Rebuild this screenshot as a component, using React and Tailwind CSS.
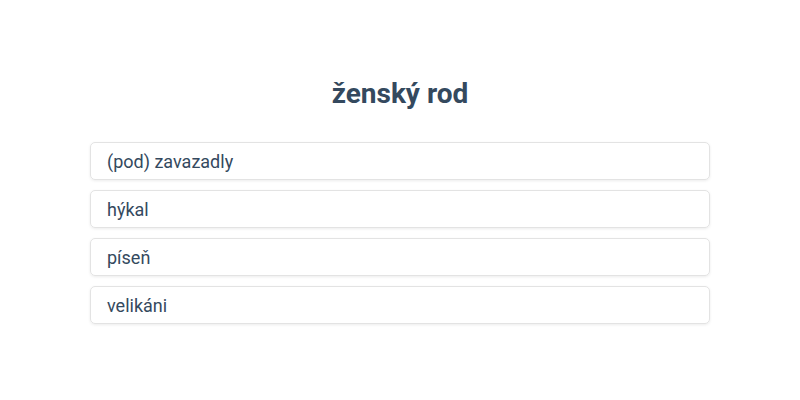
import React from 'react';

const options = ['(pod) zavazadly', 'hýkal', 'píseň', 'velikáni'];

export default function App() {
  return (
    <div className="w-[800px] h-[400px] bg-white flex flex-col items-center pt-[74px] font-['Roboto',sans-serif] text-[#34495e]">
      <h1 className="text-[28px] leading-[40px] font-bold text-[#34495e]">ženský rod</h1>
      <div className="mt-[28px] w-[620px] flex flex-col gap-[10px]">
        {options.map((o) => (
          <div
            key={o}
            className="h-[38px] flex items-center px-4 rounded-[5px] border border-[#e3e3e3] shadow-[0_1px_3px_rgba(0,0,0,0.08)] text-[18px]"
          >
            {o}
          </div>
        ))}
      </div>
    </div>
  );
}
